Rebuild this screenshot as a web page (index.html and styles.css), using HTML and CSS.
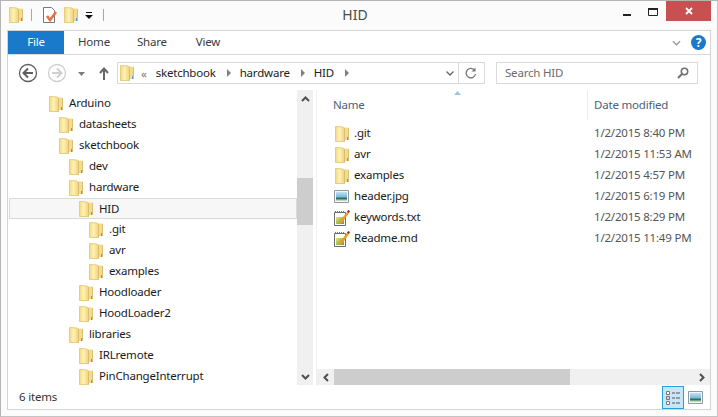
FILE: index.html
```html
<!DOCTYPE html>
<html lang="en">
<head>
  <meta charset="UTF-8">
  <title>HID</title>
  <link rel="stylesheet" href="styles.css">
</head>
<body>
  <svg class="sprites" width="0" height="0">
    <defs>
      <linearGradient id="fold">
        <stop offset="0" stop-color="#f0d889"/>
        <stop offset="0.45" stop-color="#fff2b2"/>
        <stop offset="1" stop-color="#f0d27a"/>
      </linearGradient>
      <linearGradient id="sky" x1="0" y1="0" x2="0" y2="1">
        <stop offset="0" stop-color="#c4e0f4"/>
        <stop offset="0.5" stop-color="#7fbce4"/>
        <stop offset="0.72" stop-color="#2a6f5a"/>
        <stop offset="0.85" stop-color="#7fb08a"/>
        <stop offset="1" stop-color="#e4f0e0"/>
      </linearGradient>
      <linearGradient id="leaf" x1="0" y1="0" x2="1" y2="1">
        <stop offset="0" stop-color="#e8e27a"/>
        <stop offset="1" stop-color="#5f9e2e"/>
      </linearGradient>
      <symbol id="folder" viewBox="0 0 14 16">
        <path d="M8 1.500h5.500v12.500H8z" fill="#f4dc8e"/>
        <path d="M13 2h1v12h-1z" fill="#dcbf72"/>
        <path d="M.5 .5L8 1l1.500 1.500V15.500H.5z" fill="url(#fold)" stroke="#e6cd80"/>
        <path d="M9 2h1v13.500H9z" fill="#dabd6e"/>
        <path d="M12 11h1v3h-1z" fill="#4aa3dc"/>
      </symbol>
      <symbol id="picture" viewBox="0 0 15 13">
        <path d="M.5 .5h14v12H.5z" fill="#f4f6f8" stroke="#8f9aa5"/>
        <path d="M2 2h11v9H2z" fill="url(#sky)"/>
      </symbol>
      <symbol id="note" viewBox="0 0 16 16">
        <path d="M.5 2.500h11v13H.5z" fill="#fff" stroke="#666c72"/>
        <path d="M1 1.500h10" stroke="#777" stroke-dasharray="1 1"/>
        <path d="M2 7h8v7H2z" fill="url(#leaf)"/>
        <path d="M5 12L13 2l2 1-7 10-3 1z" fill="#eb9b2b"/>
        <path d="M13 2l1-2 2 1-1 2z" fill="#8c2a1c"/>
      </symbol>
    </defs>
  </svg>

  <div class="window">
    <header class="titlebar">
      <div class="quick">
        <svg class="ico q1"><use href="#folder"/></svg>
        <span class="qsep"></span>
        <svg class="ico q2" viewBox="0 0 16 16">
          <path d="M1.500 .5h8l3 3v12h-11z" fill="#fff" stroke="#77777d"/>
          <path d="M5 9l3 4 6-8" fill="none" stroke="#e8734a" stroke-width="2.600"/>
        </svg>
        <svg class="ico q3"><use href="#folder"/></svg>
        <svg class="q4" viewBox="0 0 8 7">
          <path d="M1 0h6v1H1zM0 3h8L4 7z" fill="#111"/>
        </svg>
        <span class="qsep q5"></span>
      </div>
      <div class="wintitle">HID</div>
      <div class="caption">
        <svg class="minbtn" viewBox="0 0 8 2"><path d="M0 0h8v2H0z" fill="#222"/></svg>
        <svg class="maxbtn" viewBox="0 0 10 8"><path d="M.5 1.500h9v6h-9z" fill="none" stroke="#222"/><path d="M0 0h10v2H0z" fill="#222"/></svg>
        <div class="closebtn">
          <svg viewBox="0 0 8 8"><path d="M1 1l6 6M7 1L1 7" stroke="#fff" stroke-width="1.800"/></svg>
        </div>
      </div>
    </header>

    <div class="inner">
      <nav class="tabs">
        <div class="tab filetab">File</div>
        <div class="tab home">Home</div>
        <div class="tab share">Share</div>
        <div class="tab view">View</div>
        <svg class="ribbon-toggle" viewBox="0 0 10 6"><path d="M1 1l4 4 4-4" fill="none" stroke="#9a9a9a" stroke-width="1.500"/></svg>
        <div class="help">?</div>
      </nav>

      <div class="navbar">
        <svg class="navcircle" viewBox="0 0 20 20">
          <circle cx="10" cy="10" r="8.500" fill="#fff" stroke="#5f5f5f" stroke-width="1.300"/>
          <path d="M15 10H6M10 5.500L5.500 10l4.500 4.500" fill="none" stroke="#5f5f5f" stroke-width="2"/>
        </svg>
        <svg class="navcircle fwd" viewBox="0 0 20 20">
          <circle cx="10" cy="10" r="8.500" fill="#fff" stroke="#cfcfcf" stroke-width="1.300"/>
          <path d="M5 10h9M10 5.500l4.500 4.500-4.500 4.500" fill="none" stroke="#cfcfcf" stroke-width="2"/>
        </svg>
        <svg class="recent" viewBox="0 0 7 4"><path d="M0 0h7L3.500 4z" fill="#7c7c7c"/></svg>
        <svg class="up" viewBox="0 0 10 13"><path d="M5 13V2M1 6l4-4.500L9 6" fill="none" stroke="#666" stroke-width="2"/></svg>

        <div class="address">
          <svg class="ico addr-ico"><use href="#folder"/></svg>
          <span class="more">&laquo;</span>
          <span class="crumb c1">sketchbook</span><i class="arrow"></i>
          <span class="crumb">hardware</span><i class="arrow"></i>
          <span class="crumb">HID</span><i class="arrow"></i>
          <svg class="addr-drop" viewBox="0 0 8 5"><path d="M.5.500L4 4 7.500.5" fill="none" stroke="#666" stroke-width="1.300"/></svg>
          <div class="refresh">
            <svg viewBox="0 0 12 12"><path d="M9.800 3.500A4.700 4.700 0 1 0 10.500 7" fill="none" stroke="#777" stroke-width="1.300"/><path d="M10.500 .5v4h-4z" fill="#777"/></svg>
          </div>
        </div>

        <div class="search">
          <span>Search HID</span>
          <svg viewBox="0 0 12 12"><circle cx="7.500" cy="4.500" r="3.200" fill="none" stroke="#6f6f6f" stroke-width="1.500"/><path d="M5 7l-4 4" stroke="#6f6f6f" stroke-width="2"/></svg>
        </div>
      </div>

      <main class="panes">
        <aside class="treepane">
          <div class="tree">
            <div class="node l0"><svg class="ico"><use href="#folder"/></svg>Arduino</div>
            <div class="node l1"><svg class="ico"><use href="#folder"/></svg>datasheets</div>
            <div class="node l1"><svg class="ico"><use href="#folder"/></svg>sketchbook</div>
            <div class="node l2"><svg class="ico"><use href="#folder"/></svg>dev</div>
            <div class="node l2"><svg class="ico"><use href="#folder"/></svg>hardware</div>
            <div class="node l3 selected"><svg class="ico"><use href="#folder"/></svg>HID</div>
            <div class="node l4"><svg class="ico"><use href="#folder"/></svg>.git</div>
            <div class="node l4"><svg class="ico"><use href="#folder"/></svg>avr</div>
            <div class="node l4"><svg class="ico"><use href="#folder"/></svg>examples</div>
            <div class="node l3"><svg class="ico"><use href="#folder"/></svg>Hoodloader</div>
            <div class="node l3"><svg class="ico"><use href="#folder"/></svg>HoodLoader2</div>
            <div class="node l2"><svg class="ico"><use href="#folder"/></svg>libraries</div>
            <div class="node l3"><svg class="ico"><use href="#folder"/></svg>IRLremote</div>
            <div class="node l3"><svg class="ico"><use href="#folder"/></svg>PinChangeInterrupt</div>
          </div>
          <div class="vscroll">
            <div class="sbtn"><svg viewBox="0 0 9 6"><path d="M1 5l3.500-3.500L8 5" fill="none" stroke="#505050" stroke-width="2"/></svg></div>
            <div class="vtrack"><div class="vthumb"></div></div>
            <div class="sbtn"><svg viewBox="0 0 9 6"><path d="M1 1l3.500 3.500L8 1" fill="none" stroke="#505050" stroke-width="2"/></svg></div>
          </div>
        </aside>

        <section class="filepane">
          <div class="colhead">
            <div class="col-name">Name<svg class="sortcaret" viewBox="0 0 7 4"><path d="M3.500 0L7 4H0z" fill="#9fc4e0"/></svg></div>
            <div class="col-date">Date modified</div>
          </div>
          <div class="files">
            <div class="file"><span class="fname"><svg class="ico"><use href="#folder"/></svg>.git</span><span class="fdate">1/2/2015 8:40 PM</span></div>
            <div class="file"><span class="fname"><svg class="ico"><use href="#folder"/></svg>avr</span><span class="fdate">1/2/2015 11:53 AM</span></div>
            <div class="file"><span class="fname"><svg class="ico"><use href="#folder"/></svg>examples</span><span class="fdate">1/2/2015 4:57 PM</span></div>
            <div class="file"><span class="fname"><svg class="ico pic"><use href="#picture"/></svg>header.jpg</span><span class="fdate">1/2/2015 6:19 PM</span></div>
            <div class="file"><span class="fname"><svg class="ico wide"><use href="#note"/></svg>keywords.txt</span><span class="fdate">1/2/2015 8:29 PM</span></div>
            <div class="file"><span class="fname"><svg class="ico wide"><use href="#note"/></svg>Readme.md</span><span class="fdate">1/2/2015 11:49 PM</span></div>
          </div>
          <div class="hscroll">
            <div class="hbtn"><svg viewBox="0 0 6 9"><path d="M5 1L1.500 4.500 5 8" fill="none" stroke="#505050" stroke-width="2"/></svg></div>
            <div class="htrack"><div class="hthumb"></div></div>
            <div class="hbtn"><svg viewBox="0 0 6 9"><path d="M1 1l3.500 3.500L1 8" fill="none" stroke="#505050" stroke-width="2"/></svg></div>
          </div>
        </section>
      </main>

      <footer class="status">
        <span class="count">6 items</span>
        <div class="viewbtn active">
          <svg viewBox="0 0 16 16">
            <path d="M1.500 1.500h3v3h-3zM1.500 6.500h3v3h-3zM1.500 11.500h3v3h-3z" fill="#fff" stroke="#777"/>
            <path d="M7 3h3M11 3h4M7 8h3M11 8h4M7 13h3M11 13h4" stroke="#555"/>
            <path d="M2.500 7.500h1v1h-1z" fill="#c22"/>
          </svg>
        </div>
        <div class="viewbtn"><svg class="large"><use href="#picture"/></svg></div>
      </footer>
    </div>
  </div>
</body>
</html>
```
FILE: styles.css
```css
* {
  box-sizing: border-box;
}
html, body {
  margin: 0;
  height: 100%;
  overflow: hidden;
}
body {
  font-family: "Noto Sans", sans-serif;
  font-size: 11.5px;
  letter-spacing: -0.2px;
  color: #1a1a1a;
  background: #fff;
}
.sprites {
  display: block;
}
.ico {
  width: 14px;
  height: 16px;
  flex: none;
}
.window {
  width: 718px;
  height: 417px;
  display: flex;
  flex-direction: column;
  background: #fbfbfb;
  border: 1px solid #b4b4b4;
  border-right-color: #c4c4c4;
  border-bottom-color: #c4c4c4;
}

/* title bar */
.titlebar {
  height: 29px;
  display: flex;
  flex: none;
}
.quick {
  flex: 1;
  display: flex;
  align-items: center;
  padding: 0 0 1px 8px;
}
.qsep {
  width: 1px;
  height: 12px;
  background: #a8a8a8;
  margin-left: 8px;
}
.q2 {
  margin-left: 10px;
  width: 16px;
}
.q3 {
  margin-left: 6px;
}
.q4 {
  width: 8px;
  height: 7px;
  margin-left: 7px;
}
.q5 {
  margin-left: 10px;
}
.wintitle {
  font-size: 14px;
  letter-spacing: 0;
  width: 60px;
  text-align: center;
  padding-top: 4px;
  margin-right: 10px;
  color: #4a4a4a;
}
.caption {
  flex: 1;
  display: flex;
  justify-content: flex-end;
  align-items: flex-start;
  padding-right: 6px;
}
.minbtn {
  width: 8px;
  height: 2px;
  margin-top: 13px;
  margin-right: 17px;
}
.maxbtn {
  width: 10px;
  height: 8px;
  margin-top: 7px;
  margin-right: 8px;
}
.closebtn {
  width: 45px;
  height: 20px;
  background: #c75050;
  display: flex;
  align-items: center;
  justify-content: center;
}
.closebtn svg {
  width: 8px;
  height: 8px;
}

/* everything under the title bar */
.inner {
  flex: 1;
  min-height: 0;
  margin: 0 6px 6px;
  display: flex;
  flex-direction: column;
  background: #fff;
  border: 1px solid #d4d4d4;
}
.tabs {
  height: 24px;
  flex: none;
  display: flex;
  align-items: center;
  border-bottom: 1px solid #dadada;
  color: #3c3c3c;
}
.tab {
  padding-bottom: 2px;
}
.filetab {
  width: 56px;
  height: 23px;
  background: #1979ca;
  color: #fff;
  text-align: center;
  line-height: 22px;
  padding: 0;
}
.home {
  margin-left: 14px;
}
.share {
  margin-left: 27px;
}
.view {
  margin-left: 29px;
}
.ribbon-toggle {
  width: 9px;
  height: 6px;
  margin-left: auto;
}
.help {
  width: 15px;
  height: 15px;
  margin: 0 4px 0 10px;
  border-radius: 50%;
  background: #1979ca;
  color: #fff;
  font-weight: bold;
  font-size: 12px;
  line-height: 15px;
  text-align: center;
}

/* back / forward / address / search */
.navbar {
  height: 35px;
  flex: none;
  display: flex;
  align-items: flex-start;
  padding: 7px 0 0 10px;
}
.navcircle {
  width: 20px;
  height: 20px;
  margin-top: 1px;
}
.fwd {
  margin-left: 9px;
}
.recent {
  width: 7px;
  height: 4px;
  margin: 10px 0 0 11px;
}
.up {
  width: 10px;
  height: 13px;
  margin: 5px 0 0 14px;
}
.address, .search {
  height: 22px;
  background: #fff;
  border: 1px solid #d9d9d9;
  display: flex;
  align-items: center;
}
.address {
  width: 368px;
  margin-left: 8px;
  padding-left: 2px;
}
.more {
  margin-left: 7px;
  color: #777;
}
.crumb {
  color: #222;
  padding-bottom: 2px;
}
.c1 {
  margin-left: 9px;
}
.arrow {
  width: 0;
  height: 0;
  margin: 0 9px 0 11px;
  border-left: 4px solid #808080;
  border-top: 4px solid transparent;
  border-bottom: 4px solid transparent;
}
.addr-drop {
  width: 8px;
  height: 5px;
  margin-left: auto;
}
.refresh {
  width: 26px;
  height: 20px;
  margin-left: 4px;
  padding-right: 2px;
  border-left: 1px solid #d9d9d9;
  display: flex;
  align-items: center;
  justify-content: center;
}
.refresh svg {
  width: 12px;
  height: 12px;
}
.search {
  width: 202px;
  margin-left: 11px;
  padding: 0 8px;
  justify-content: space-between;
  color: #6d6d6d;
}
.search span {
  padding-bottom: 2px;
}
.search svg {
  width: 12px;
  height: 12px;
}

/* the two panes */
.panes {
  flex: 1;
  min-height: 0;
  display: flex;
}
.treepane {
  width: 305px;
  flex: none;
  display: flex;
  min-height: 0;
}
.tree {
  flex: 1;
  overflow: hidden;
  padding: 3px 0 0 1px;
}
.node {
  height: 21px;
  display: flex;
  align-items: center;
  gap: 6px;
  padding-bottom: 2px;
  color: #1a1a1a;
}
.node .ico, .fname .ico {
  margin-top: 2px;
}
.l0 { padding-left: 40px; }
.l1 { padding-left: 50px; }
.l2 { padding-left: 60px; }
.l3 { padding-left: 70px; }
.l4 { padding-left: 80px; }
.selected {
  background: #f7f7f7;
  border: 1px solid #d9d9d9;
  padding-left: 69px;
  padding-bottom: 1px;
}
.vscroll {
  width: 16px;
  flex: none;
  display: flex;
  flex-direction: column;
  background: #f0f0f0;
  margin-bottom: 1px;
}
.sbtn {
  height: 17px;
  flex: none;
  display: flex;
  align-items: center;
  justify-content: center;
}
.sbtn svg {
  width: 9px;
  height: 6px;
}
.vtrack {
  flex: 1;
  padding-top: 71px;
}
.vthumb {
  height: 47px;
  background: #cdcdcd;
}
.filepane {
  flex: 1;
  min-width: 0;
  display: flex;
  flex-direction: column;
  margin-left: 3px;
  border-left: 1px solid #f0f0f0;
}
.colhead {
  height: 30px;
  flex: none;
  display: flex;
  align-items: center;
  color: #4c607a;
}
.col-name {
  width: 271px;
  padding: 0 0 2px 16px;
  height: 100%;
  display: flex;
  align-items: center;
  position: relative;
  border-right: 1px solid #e8edf4;
}
.sortcaret {
  position: absolute;
  left: 137px;
  top: 1px;
  width: 7px;
  height: 4px;
}
.col-date {
  padding: 0 0 2px 6px;
}
.files {
  flex: 1;
  padding-top: 3px;
}
.file {
  height: 21px;
  display: flex;
  align-items: center;
}
.fname {
  width: 271px;
  padding: 0 0 2px 18px;
  display: flex;
  align-items: center;
  gap: 5px;
}
.fname .pic {
  width: 15px;
  height: 13px;
  margin-left: -1px;
}
.fname .wide {
  width: 16px;
  margin: 2px -1px 0 -1px;
}
.fdate {
  padding: 0 0 2px 6px;
  color: #555;
}
.hscroll {
  height: 16px;
  flex: none;
  display: flex;
  margin-bottom: 1px;
  background: #f0f0f0;
}
.hbtn {
  width: 17px;
  flex: none;
  display: flex;
  align-items: center;
  justify-content: center;
}
.hbtn svg {
  width: 6px;
  height: 9px;
}
.htrack {
  flex: 1;
}
.hthumb {
  width: 236px;
  height: 100%;
  background: #cdcdcd;
}

/* status bar */
.status {
  height: 23px;
  flex: none;
  display: flex;
  align-items: center;
  padding: 0 4px 0 11px;
}
.count {
  margin-right: auto;
  padding-bottom: 2px;
  color: #333;
}
.viewbtn {
  width: 22px;
  height: 23px;
  display: flex;
  align-items: center;
  justify-content: center;
}
.viewbtn svg {
  width: 16px;
  height: 16px;
}
.viewbtn .large {
  width: 15px;
  height: 13px;
}
.active {
  background: #c9e6f8;
  border: 1px solid #26a0da;
}
```
